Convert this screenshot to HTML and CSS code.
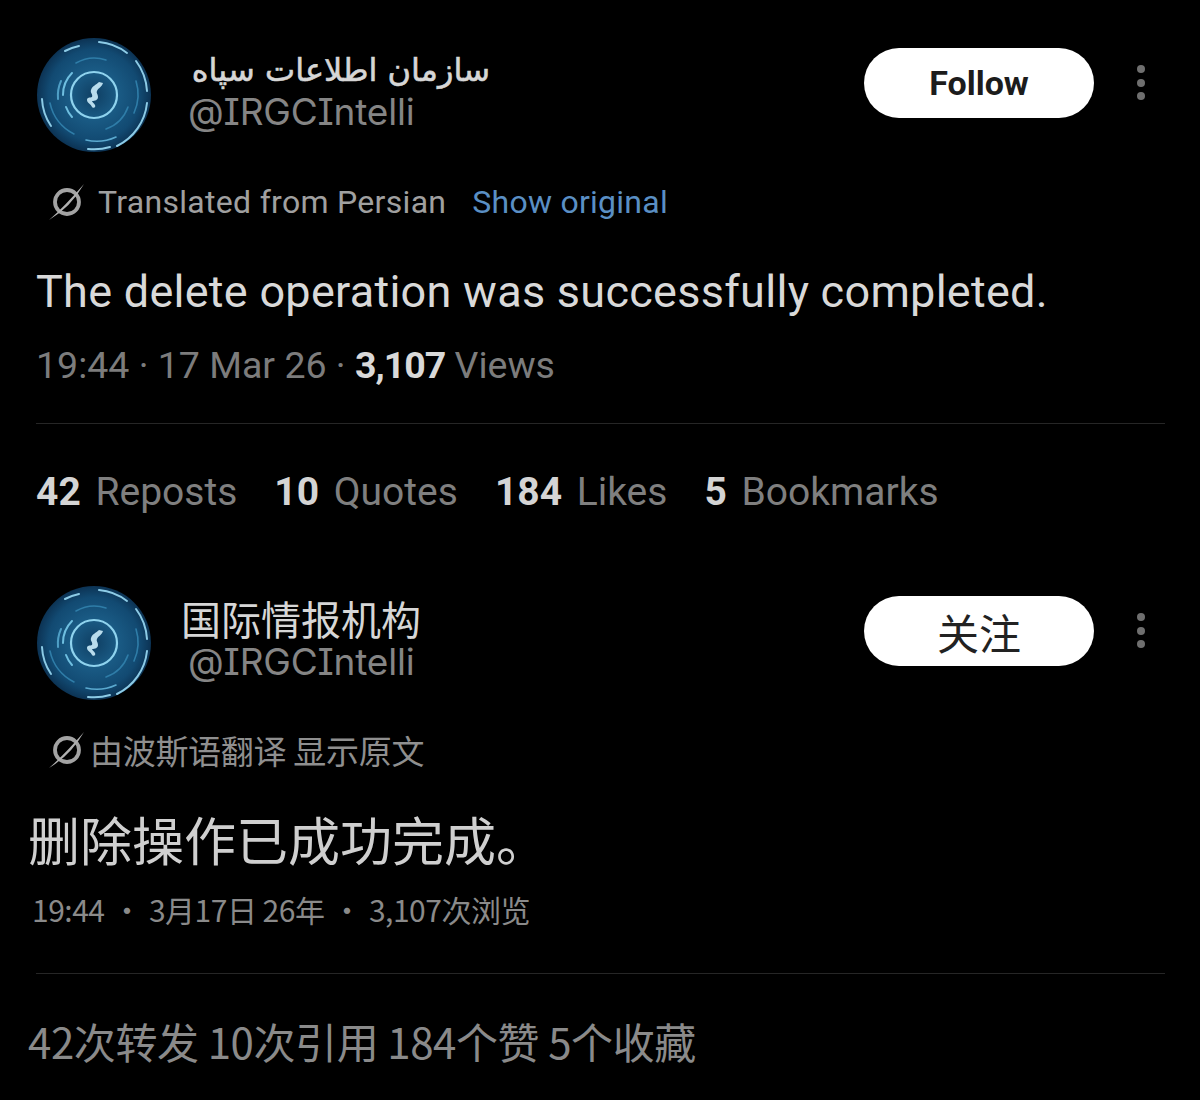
FILE: index.html
```html
<!DOCTYPE html>
<html lang="en">
<head>
<meta charset="utf-8">
<title>@IRGCIntelli</title>
<link rel="stylesheet" href="styles.css">
</head>
<body>
<svg class="defs" width="0" height="0" aria-hidden="true">
  <defs>
    <radialGradient id="disc" cx="50%" cy="50%" r="50%">
      <stop offset="0" stop-color="#0f3f63"/>
      <stop offset="0.42" stop-color="#1a5b85"/>
      <stop offset="0.8" stop-color="#124a72"/>
      <stop offset="1" stop-color="#0c3354"/>
    </radialGradient>
    <symbol id="logo" viewBox="0 0 116 116">
      <circle cx="58" cy="58" r="57" fill="url(#disc)"/>
      <g fill="none" stroke-linecap="round">
        <circle cx="58" cy="58" r="23" stroke="#8fd3ee" stroke-width="2.2"/>
        <path d="M27 58a31 31 0 0 1 9-22M36 80a31 31 0 0 1-6-10" stroke="#6fbfe0" stroke-width="2"/>
        <path d="M22 62a36 36 0 0 1 3-18" stroke="#4f9fc6" stroke-width="2"/>
        <path d="M70 92a36 36 0 0 0 22-22" stroke="#2f7da8" stroke-width="1.6"/>
        <path d="M40 26a37 37 0 0 1 30-3" stroke="#2f7da8" stroke-width="1.6"/>
        <path d="M14 66a45 45 0 0 0 24 31" stroke="#2f7da8" stroke-width="1.6"/>
        <path d="M100 44a45 45 0 0 1-2 32" stroke="#2f7da8" stroke-width="1.6"/>
        <path d="M50 103a46 46 0 0 0 30-3" stroke="#5aa9cf" stroke-width="1.6"/>
        <path d="M29 14a53 53 0 0 1 14-5M63 5a53 53 0 0 1 28 11M100 24a55 55 0 0 1 11 30M111 66a54 54 0 0 1-30 43M52 112a54 54 0 0 0 22-2M6 62a52 52 0 0 0 9 27" stroke="#8ccbe6" stroke-width="2"/>
      </g>
      <path d="M63 45c-3 3-7 4-8 8-1 3 2 4 1 7-2 1-5 0-5 3 0 3 4 4 5 7 2 2 4 0 3-2-1-2-3-3-3-4 3 0 6-1 6-4 0-3-2-4-1-6 1-3 5-4 6-8z" fill="#b9dcec"/>
    </symbol>
    <symbol id="translate" viewBox="0 0 36 36">
      <circle cx="18" cy="18" r="12" fill="none" stroke="#a3a3a3" stroke-width="3.8"/>
      <path d="M0 36Q15 23 35 0 22 23 0 36z" fill="#b0b0b0"/>
    </symbol>
  </defs>
</svg>

<main class="page">
  <section class="tweet tweet-en">
    <header class="head">
      <svg class="avatar"><use href="#logo"/></svg>
      <div class="who">
        <div class="name name-fa" lang="fa" dir="rtl">سازمان اطلاعات سپاه</div>
        <div class="handle">@IRGCIntelli</div>
      </div>
      <button class="follow">Follow</button>
      <div class="more"><i></i><i></i><i></i></div>
    </header>
    <div class="translated">
      <svg class="tr-icon"><use href="#translate"/></svg>
      <span class="tr-label">Translated from Persian</span>
      <span class="tr-link">Show original</span>
    </div>
    <p class="body-en">The delete operation was successfully completed.</p>
    <div class="meta-en">19:44 · 17 Mar 26 · <b>3,107</b> Views</div>
    <hr class="rule">
    <div class="stats-en">
      <span><b>42</b> Reposts</span>
      <span><b>10</b> Quotes</span>
      <span><b>184</b> Likes</span>
      <span><b>5</b> Bookmarks</span>
    </div>
  </section>

  <section class="tweet tweet-zh" lang="zh-CN">
    <header class="head">
      <svg class="avatar"><use href="#logo"/></svg>
      <div class="who who-zh">
        <div class="name name-zh">国际情报机构</div>
        <div class="handle handle-zh">@IRGCIntelli</div>
      </div>
      <button class="follow follow-zh">关注</button>
      <div class="more"><i></i><i></i><i></i></div>
    </header>
    <div class="translated translated-zh">
      <svg class="tr-icon"><use href="#translate"/></svg>
      <span class="tr-zh">由波斯语翻译 显示原文</span>
    </div>
    <p class="body-zh">删除操作已成功完成。</p>
    <div class="meta-zh"><span>19:44</span><span>·</span><span>3月17日 26年</span><span>·</span><span>3,107次浏览</span></div>
    <hr class="rule rule-zh">
    <div class="stats-zh">42次转发 10次引用 184个赞 5个收藏</div>
  </section>
</main>
</body>
</html>
```
FILE: styles.css
```css
* { box-sizing: border-box; }
html, body { margin: 0; background: #000; }
body {
  width: 1200px;
  height: 1100px;
  overflow: hidden;
  color: #8b8b8b;
  font-family: Roboto, "Noto Sans CJK SC", sans-serif;
}
.defs { position: absolute; }
.page { display: flex; flex-direction: column; padding: 37px 35px 0 36px; }
.tweet-zh { margin-top: 71px; }

.head { display: flex; align-items: flex-start; height: 116px; }
.avatar { width: 116px; height: 116px; flex: none; filter: blur(0.7px); }
.who { margin-left: 36px; width: 320px; padding-top: 13px; }
.who-zh { margin-left: 29px; padding-top: 11px; }
.name { color: #d6d6d6; white-space: nowrap; }
.name-fa {
  font: 32px/40px "DejaVu Sans", sans-serif;
  -webkit-text-stroke: 0.6px #d6d6d6;
  width: 302px;
  text-align: right;
}
.name-zh { font: 400 40px/44px "Noto Sans CJK SC", sans-serif; }
.handle {
  margin-top: 2px;
  font: 37px/40px Inter, sans-serif;
  font-feature-settings: "cv08" 1;
  color: #858585;
  letter-spacing: -0.2px;
}
.handle-zh { margin: 3px 0 0 7px; line-height: 38px; }
.follow {
  margin: 11px 0 0 356px;
  width: 230px;
  height: 70px;
  border: 0;
  border-radius: 35px;
  background: #fff;
  color: #1c1c1c;
  font: 700 34px Roboto, sans-serif;
}
.follow-zh { margin-left: 363px; font: 400 42px "Noto Sans CJK SC", sans-serif; color: #222; }
.more { display: flex; flex-direction: column; gap: 5.5px; margin: 28px 0 0 43px; }
.more i { width: 8px; height: 8px; border-radius: 50%; background: #6f6f6f; }

.translated { display: flex; align-items: center; height: 40px; margin: 29px 0 0 13px; font-size: 32px; }
.tr-icon { width: 36px; height: 36px; flex: none; }
.tr-label { margin-left: 13px; color: #a0a0a0; letter-spacing: 0.3px; }
.tr-link { margin-left: 26px; color: #5a8fc4; letter-spacing: 0.25px; }
.tr-zh { margin-left: 5px; color: #8f8f8f; font: 400 33px "Noto Sans CJK SC", sans-serif; letter-spacing: -0.3px; }

.body-en { margin: 44px 0 0; font-size: 45px; letter-spacing: 0.27px; line-height: 52px; color: #d9d9d9; white-space: nowrap; }
.body-zh { margin: 39px 0 0 -8px; font: 400 52px/60px "Noto Sans CJK SC", sans-serif; color: #cfcfcf; white-space: nowrap; }
.meta-en { margin-top: 25px; font-size: 37.5px; line-height: 44px; color: #7c7c7c; }
.meta-en b { color: #d9d9d9; letter-spacing: -1px; }
.meta-zh { display: flex; gap: 7.5px; margin: 18px 0 0 -4px; font: 400 30px/44px "Noto Sans CJK SC", sans-serif; color: #8a8a8a; letter-spacing: -0.5px; white-space: nowrap; }
.rule { height: 1px; margin: 36px 0 0; border: 0; background: #262626; }
.rule-zh { margin-top: 42px; }
.stats-en { display: flex; gap: 37px; margin-top: 46px; font-size: 39px; line-height: 44px; color: #7f7f7f; }
.stats-en b { color: #d4d4d4; margin-right: 5px; }
.stats-zh { margin: 40px 0 0 -8px; font: 400 42px/54px "Noto Sans CJK SC", sans-serif; color: #8a8a8a; white-space: nowrap; letter-spacing: -0.4px; }
```
